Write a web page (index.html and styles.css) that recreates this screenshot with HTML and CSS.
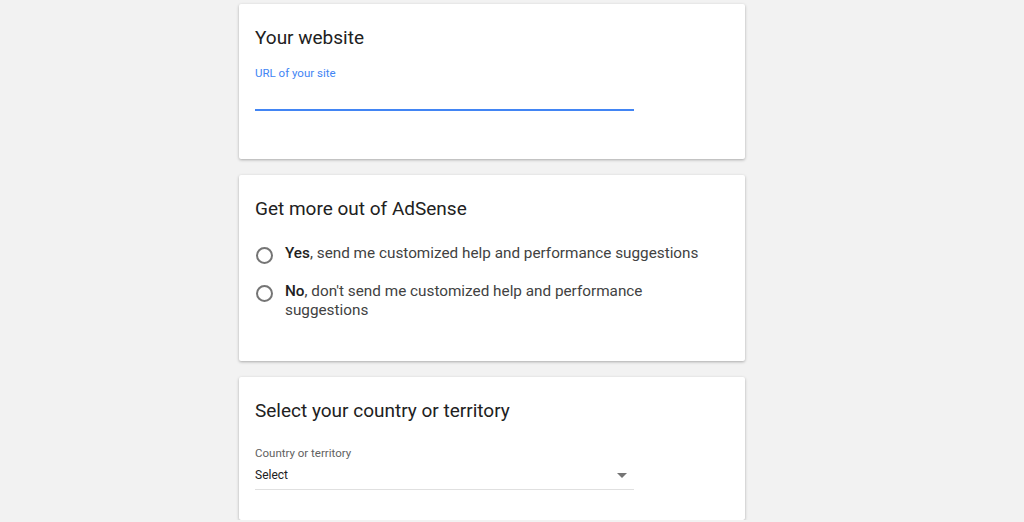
FILE: index.html
```html
<!DOCTYPE html>
<html lang="en">
<head>
<meta charset="UTF-8" />
<meta name="viewport" content="width=device-width, initial-scale=1.0" />
<title>AdSense sign up</title>
<link rel="stylesheet" href="styles.css">
</head>
<body>
  <div class="page">
    <div class="card card-site">
      <h2>Your website</h2>
      <label class="field-label focused" for="siteUrl">URL of your site</label>
      <input class="field-input" id="siteUrl" type="text" />
    </div>

    <div class="card card-emails">
      <h2>Get more out of AdSense</h2>
      <div class="options">
        <label class="option">
          <span class="radio"></span>
          <span class="option-text"><b>Yes</b>, send me customized help and performance suggestions</span>
        </label>
        <label class="option">
          <span class="radio"></span>
          <span class="option-text"><b>No</b>, don't send me customized help and performance suggestions</span>
        </label>
      </div>
    </div>

    <div class="card card-country">
      <h2>Select your country or territory</h2>
      <div class="field-label">Country or territory</div>
      <div class="select">
        <span class="select-value">Select</span>
        <span class="arrow"></span>
      </div>
    </div>
  </div>
</body>
</html>
```

FILE: styles.css
```css
body {
  margin: 0;
  background: #f2f2f2;
  font-family: Roboto, "Noto Sans", Arial, sans-serif;
  color: #212121;
}

.page {
  display: flex;
  flex-direction: column;
  gap: 16px;
  padding: 4px 0 0 239px;
}

.card {
  width: 506px;
  box-sizing: border-box;
  background: #fff;
  border-radius: 2px;
  box-shadow: 0 1px 3px rgba(0,0,0,0.3);
  padding: 22px 16px 0 16px;
}

h2 {
  margin: 0;
  font-size: 19px;
  line-height: 24px;
  font-weight: 400;
  color: #212121;
}

.field-label {
  display: block;
  font-size: 11.5px;
  line-height: 16px;
  color: #616161;
}
.field-label.focused { color: #4285f4; }

/* Your website */
.card-site { height: 155px; }
.card-site .field-label { margin-top: 15px; }
.field-input {
  display: block;
  width: 379px;
  height: 28px;
  box-sizing: content-box;
  padding: 0;
  border: 0;
  border-bottom: 2px solid #4285f4;
  outline: none;
  font: inherit;
  font-size: 15px;
  background: transparent;
}

/* Emails */
.card-emails { height: 186px; }
.options {
  display: flex;
  flex-direction: column;
  gap: 18px;
  margin-top: 23px;
}
.option {
  display: flex;
  align-items: flex-start;
  gap: 12px;
  cursor: pointer;
}
.radio {
  flex: none;
  width: 13px;
  height: 13px;
  margin: 3px 0 0 1px;
  border: 2px solid #757575;
  border-radius: 50%;
}
.option-text {
  width: 430px;
  font-size: 15.3px;
  line-height: 19px;
  color: #424242;
}
.option-text b {
  font-weight: 500;
  color: #212121;
}

/* Country */
.card-country { height: 143px; }
.card-country .field-label { margin-top: 22px; }
.select {
  display: flex;
  align-items: flex-start;
  justify-content: space-between;
  width: 379px;
  height: 23px;
  margin-top: 6px;
  padding-right: 7px;
  box-sizing: border-box;
  border-bottom: 1px solid #e0e0e0;
  font-size: 12px;
  line-height: 16px;
  color: #212121;
}
.arrow {
  width: 0;
  height: 0;
  margin-top: 6px;
  border-left: 5px solid transparent;
  border-right: 5px solid transparent;
  border-top: 5px solid #757575;
}
```
